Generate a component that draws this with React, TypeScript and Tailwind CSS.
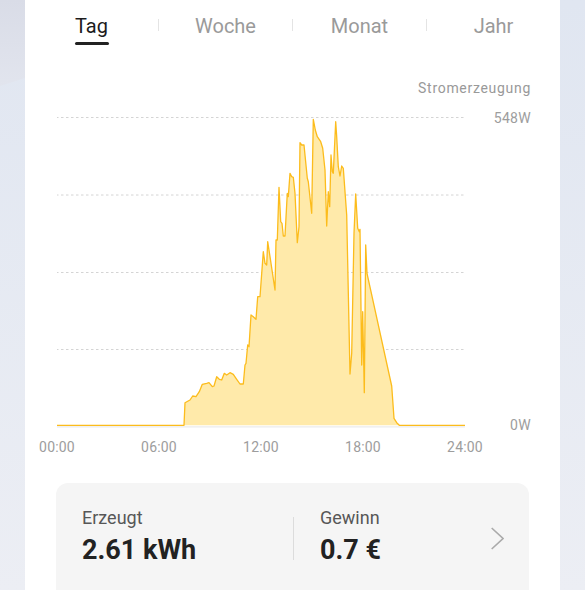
import React from 'react';

const TABS = ['Tag', 'Woche', 'Monat', 'Jahr'];
const HOURS = ['00:00', '06:00', '12:00', '18:00', '24:00'];

// abs. Pixelkoordinaten der Erzeugungskurve (viewBox = Seitenkoordinaten)
const CURVE =
  '184,425.3 185,402.7 190,400 192.7,396 196,396.7 199.3,391.7 202.3,384.3 206.7,383.3 209,382.7 212.3,386.7 214,386 216.7,376.7 219.3,379.3 221.7,380 224.3,373.3 226.7,375 230,372.7 233.3,374.3 236.7,379.3 240,384 243.3,384 245,365 246,363.3 247.7,345 249,346.7 251,315 253.3,316.7 256,319.3 257.7,296.7 260,296.7 263.3,251.7 265,263.3 266.7,265 267.7,241.7 270,256.7 275,290 276,240 277.3,240 279,187.3 280.7,221.7 282,223.3 283.3,236 285,236 287.3,193.3 288.3,196.7 290,173.3 291.7,176.7 293.3,177.3 295,193.3 297.3,242.7 299,226.7 300,142.7 301.7,145 304,145 307.3,178.3 308.3,181.7 311.7,213.3 313.3,119.3 315.3,130 317.3,136.7 320.7,141.7 322.7,148.3 325,170 326.7,226 328.3,191.7 329.7,206.7 331,155 332.3,171.7 333.3,173.3 335.7,121.7 336.7,136.7 338.3,166.7 340,176 341.7,166 343.3,168.3 346.7,215 350,374 351.7,353.3 354,233.3 355.7,194 357.7,228.3 359.3,231.7 360,229.3 361.7,365 362.7,311.7 364.3,392.7 365.7,245 367,273.3 391.7,386 394,418.3 396.7,422.7 399.3,425.3';

function Chart() {
  return (
    <svg width={408} height={314} viewBox="57 115 408 314" className="block shrink-0">
      {[117.5, 195, 272.5, 349.5].map(y => (
        <line key={y} x1={56} x2={465} y1={y} y2={y} stroke="#d4d4d4" strokeWidth={1} strokeDasharray="2.5 2.5" />
      ))}
      <line x1={57} x2={465} y1={426.8} y2={426.8} stroke="#ebebeb" strokeWidth={1.2} />
      <polygon points={`57,425.3 ${CURVE} 465,425.3`} fill="#ffeaaa" />
      <polyline points={`57,425.3 ${CURVE} 465,425.3`} fill="none" stroke="#fcbc1c" strokeWidth={1.3} strokeLinejoin="round" />
    </svg>
  );
}

export default function App() {
  return (
    <div className="relative h-[590px] overflow-hidden bg-gradient-to-b from-[#e0e6f1] to-[#eceef4] font-['Roboto',sans-serif]">
      <div className="absolute left-0 top-0 h-[90px] w-[25px] bg-gradient-to-b from-[#d9dce7] to-[#e2e5ee] [clip-path:polygon(0_0,100%_0,100%_78px,0_86px)]" />

      <div className="relative mx-[25px] h-[590px] bg-white">
        {/* Tabs */}
        <div className="flex pt-[12px]">
          {TABS.map((t, i) => (
            <React.Fragment key={t}>
              {i > 0 && <div className="mt-[7px] h-[12px] w-px bg-[#e4e4e4]" />}
              <div className="flex flex-1 justify-center">
                <div className="inline-flex flex-col items-center">
                  <span className={`text-[20px] leading-[28px] ${i === 0 ? 'text-[#1c1c1c]' : 'text-[#9a9a9a]'}`}>{t}</span>
                  {i === 0 && <div className="mt-[2px] h-[3px] w-[34px] rounded-full bg-[#222]" />}
                </div>
              </div>
            </React.Fragment>
          ))}
        </div>

        {/* Axis title */}
        <div className="mt-[33px] pr-[29px] text-right text-[14px] leading-[20px] tracking-[0.7px] text-[#999]">Stromerzeugung</div>

        {/* Chart */}
        <div className="mt-[17px] flex pl-[32px]">
          <Chart />
          <div className="flex h-[314px] flex-1 flex-col items-end justify-between pr-[29px] text-[14px] leading-[20px] tracking-[0.3px] text-[#9d9d9d]">
            <span className="-mt-[7px]">548W</span>
            <span className="-mb-[6px]">0W</span>
          </div>
        </div>

        <div className="ml-[12px] mt-[8px] flex w-[448px] justify-between text-[14px] leading-[20px] tracking-[0.2px] text-[#9d9d9d]">
          {HOURS.map(h => (
            <span key={h} className="w-[40px] text-center">{h}</span>
          ))}
        </div>

        {/* Summary */}
        <div className="mx-[31px] mt-[26px] flex h-[124px] rounded-[12px] bg-[#f5f5f5] pl-[26px] pr-[25px] pt-[23px]">
          <div className="w-[211px]">
            <div className="text-[18px] leading-[24px] text-[#575757]">Erzeugt</div>
            <div className="mt-[4px] text-[27px] font-bold leading-[32px] text-[#222]">2.61 kWh</div>
          </div>
          <div className="mt-[11px] h-[43px] w-px bg-[#dcdcdc]" />
          <div className="flex-1 pl-[26px]">
            <div className="text-[18px] leading-[24px] text-[#575757]">Gewinn</div>
            <div className="mt-[4px] text-[27px] font-bold leading-[32px] text-[#222]">0.7 €</div>
          </div>
          <svg width={14} height={24} viewBox="0 0 14 24" className="mt-[21px] shrink-0">
            <polyline points="1.7,1 13,11.5 1.7,22" fill="none" stroke="#aaaaaa" strokeWidth={1.6} />
          </svg>
        </div>
      </div>
    </div>
  );
}
